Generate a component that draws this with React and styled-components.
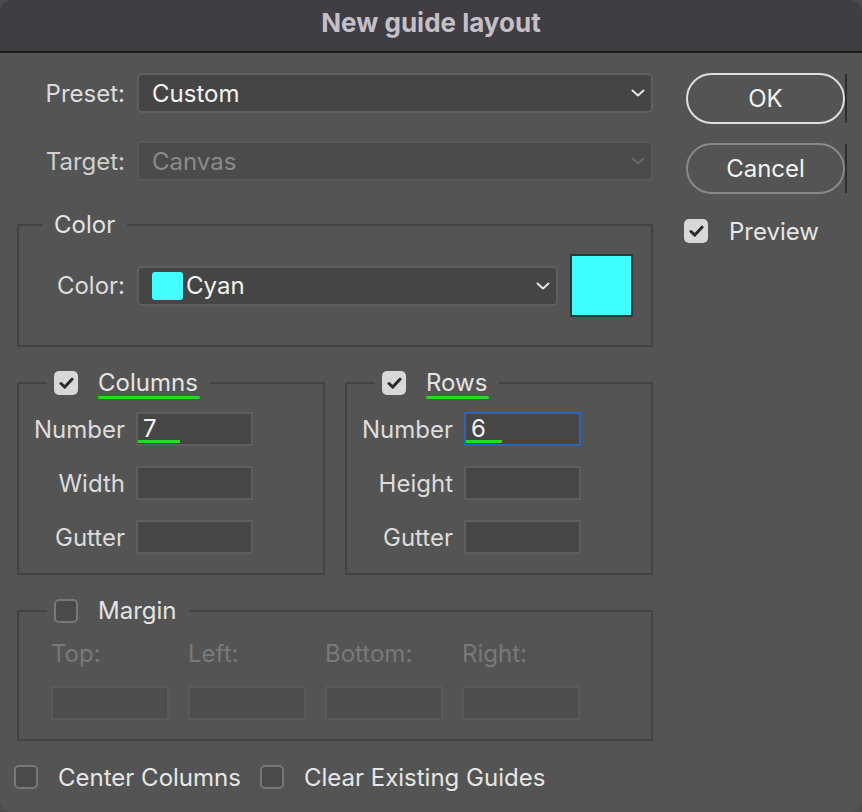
import React from 'react';
import styled, { createGlobalStyle, css } from 'styled-components';

const GlobalStyle = createGlobalStyle`
  html, body {
    margin: 0;
    background: #4c4c4c;
  }
  body {
    font-family: Inter, "Liberation Sans", Arial, sans-serif;
    -webkit-font-smoothing: antialiased;
  }
  * {
    box-sizing: border-box;
  }
`;

const Dialog = styled.div`
  width: 862px;
  height: 812px;
  background: #545454;
  border-radius: 12px;
  overflow: hidden;
  display: flex;
  flex-direction: column;
  color: #dedede;
  font-size: 24px;
`;

const TitleBar = styled.header`
  height: 53px;
  flex: none;
  background: #403e43;
  border-bottom: 2px solid #1d1d1d;
  display: flex;
  align-items: center;
  justify-content: center;
  font-size: 26px;
  font-weight: 700;
  color: #c4c0c9;
  padding-bottom: 6px;
`;

const Body = styled.div`
  display: flex;
  gap: 33px;
  padding: 20px 16px 0 17px;
`;

const LeftCol = styled.div`
  width: 636px;
  display: flex;
  flex-direction: column;
`;

const RightCol = styled.div`
  width: 159px;
  display: flex;
  flex-direction: column;
`;

const Row = styled.div`
  display: flex;
  align-items: center;
  height: ${p => p.$h || 40}px;
  margin-top: ${p => p.$mt || 0}px;
`;

const Label = styled.span`
  width: ${p => p.$w || 108}px;
  margin-right: ${p => p.$gap || 12}px;
  text-align: right;
  color: ${p => (p.$disabled ? '#d0d0d0' : '#dcdcdc')};
  flex: none;
`;

const Select = styled.div`
  flex: ${p => (p.$w ? 'none' : 1)};
  width: ${p => (p.$w ? `${p.$w}px` : 'auto')};
  height: 40px;
  display: flex;
  align-items: center;
  padding: 0 6px 0 13px;
  border-radius: 5px;
  background: ${p => (p.$disabled ? '#4b4b4b' : '#454545')};
  border: 2px solid ${p => (p.$disabled ? '#595959' : '#5f5f5f')};
  color: ${p => (p.$disabled ? '#8a8a8a' : '#f3f3f3')};
`;

const SelectValue = styled.span`
  flex: 1;
  display: flex;
  align-items: center;
  gap: 3px;
`;

const ChipSwatch = styled.span`
  width: 31px;
  height: 28px;
  border-radius: 3px;
  background: #43ffff;
`;

const BigSwatch = styled.div`
  width: 63px;
  height: 63px;
  margin-left: 12px;
  background: #40ffff;
  border: 2px solid #2b3838;
  flex: none;
`;

const Chevron = ({ disabled }) => (
  <svg width="14" height="8" viewBox="0 0 14 8" fill="none">
    <path
      d="M1.5 1.5l5.5 5 5.5-5"
      stroke={disabled ? '#676767' : '#e6e6e6'}
      strokeWidth="2"
      strokeLinecap="round"
      strokeLinejoin="round"
    />
  </svg>
);

const Group = styled.fieldset`
  margin: ${p => p.$mt || 0}px 0 0;
  padding: 15px 0 ${p => p.$pb || 19}px 0;
  border: 2px solid #434343;
  min-width: 0;
  flex: 1;
`;

const Legend = styled.legend`
  margin-left: ${p => p.$ml || 24}px;
  padding: 0 12px 0 ${p => p.$pl || 11}px;
  height: 28px;
  line-height: 28px;
  display: flex;
  align-items: center;
  gap: 20px;
  color: #e4e4e4;
`;

const Marked = styled.span`
  position: relative;
  ${p =>
    p.$mark &&
    css`
      &::after {
        content: '';
        position: absolute;
        left: 0;
        right: -2px;
        bottom: -2px;
        height: 3px;
        border-radius: 2px;
        background: #1fe01f;
      }
    `}
`;

const GroupPair = styled.div`
  display: flex;
  gap: 20px;
  margin-top: 22px;
`;

const FieldList = styled.div`
  display: flex;
  flex-direction: column;
  gap: 20px;
`;

const Field = styled.div`
  position: relative;
  width: ${p => p.$w || 117}px;
  height: 34px;
  background: ${p => (p.$disabled ? '#4d4d4d' : '#464646')};
  border: 2px solid ${p => (p.$focus ? '#2f64b2' : p.$disabled ? '#5a5a5a' : '#5e5e5e')};
  color: #f4f4f4;
  padding-left: 5px;
  line-height: 30px;
  ${p =>
    p.$mark &&
    css`
      &::after {
        content: '';
        position: absolute;
        left: 0;
        bottom: 1px;
        width: ${p.$mark}px;
        height: 3px;
        background: #1fe01f;
      }
    `}
`;

const MarginGrid = styled.div`
  display: grid;
  grid-template-columns: repeat(4, 118px);
  column-gap: 19px;
  row-gap: 18px;
  padding-left: 32px;
`;

const DimLabel = styled.span`
  color: #797979;
  height: 28px;
  line-height: 28px;
`;

const Box = styled.span`
  width: 24px;
  height: 24px;
  flex: none;
  border-radius: 5px;
  display: inline-flex;
  align-items: center;
  justify-content: center;
  background: ${p => (p.$checked ? '#d8d8d8' : '#4a4a4a')};
  border: ${p => (p.$checked ? 'none' : '2px solid #787878')};
`;

const Checkbox = ({ checked }) => (
  <Box $checked={checked}>
    {checked && (
      <svg width="15" height="12" viewBox="0 0 15 12" fill="none">
        <path
          d="M2 6.5l3.8 3.6L13 2.2"
          stroke="#2a2a2a"
          strokeWidth="3"
          strokeLinecap="round"
          strokeLinejoin="round"
        />
      </svg>
    )}
  </Box>
);

const CheckRow = styled.label`
  display: flex;
  align-items: center;
  height: 28px;
  gap: ${p => p.$gap || 20}px;
  margin: ${p => p.$mt || 0}px 0 0 ${p => p.$ml || 0}px;
  color: #e6e6e6;
`;

const BottomRow = styled.div`
  display: flex;
  align-items: center;
  gap: 19px;
  margin: 22px 0 0 -3px;
`;

const Button = styled.button`
  position: relative;
  width: 159px;
  height: 51px;
  margin-top: ${p => p.$mt || 0}px;
  border-radius: 26px;
  background: transparent;
  border: 2px solid ${p => (p.$primary ? '#dedede' : '#898989')};
  color: #f2f2f2;
  font: inherit;
  font-size: 24px;

  &::after {
    content: '';
    position: absolute;
    right: -4px;
    top: -1px;
    bottom: -1px;
    width: 2px;
    background: #2e2e2e;
  }
`;

export default function App() {
  return (
    <>
      <GlobalStyle />
      <Dialog>
        <TitleBar>New guide layout</TitleBar>
        <Body>
          <LeftCol>
            <Row>
              <Label>Preset:</Label>
              <Select>
                <SelectValue>Custom</SelectValue>
                <Chevron />
              </Select>
            </Row>
            <Row $mt={28}>
              <Label $disabled>Target:</Label>
              <Select $disabled>
                <SelectValue>Canvas</SelectValue>
                <Chevron disabled />
              </Select>
            </Row>

            <Group $mt={30} $pb={28}>
              <Legend $ml={24}>Color</Legend>
              <Row $h={63}>
                <Label $w={106}>Color:</Label>
                <Select $w={421}>
                  <SelectValue>
                    <ChipSwatch />
                    Cyan
                  </SelectValue>
                  <Chevron />
                </Select>
                <BigSwatch />
              </Row>
            </Group>

            <GroupPair>
              <Group>
                <Legend $ml={28} $pl={7}>
                  <Checkbox checked />
                  <Marked $mark>Columns</Marked>
                </Legend>
                <FieldList>
                  <Row $h={34}>
                    <Label $w={106} $gap={11}>Number</Label>
                    <Field $mark={42}>7</Field>
                  </Row>
                  <Row $h={34}>
                    <Label $w={106} $gap={11}>Width</Label>
                    <Field />
                  </Row>
                  <Row $h={34}>
                    <Label $w={106} $gap={11}>Gutter</Label>
                    <Field />
                  </Row>
                </FieldList>
              </Group>
              <Group>
                <Legend $ml={28} $pl={7}>
                  <Checkbox checked />
                  <Marked $mark>Rows</Marked>
                </Legend>
                <FieldList>
                  <Row $h={34}>
                    <Label $w={106} $gap={11}>Number</Label>
                    <Field $focus $mark={36}>6</Field>
                  </Row>
                  <Row $h={34}>
                    <Label $w={106} $gap={11}>Height</Label>
                    <Field />
                  </Row>
                  <Row $h={34}>
                    <Label $w={106} $gap={11}>Gutter</Label>
                    <Field />
                  </Row>
                </FieldList>
              </Group>
            </GroupPair>

            <Group $mt={22}>
              <Legend $ml={28} $pl={7}>
                <Checkbox />
                <span>Margin</span>
              </Legend>
              <MarginGrid>
                <DimLabel>Top:</DimLabel>
                <DimLabel>Left:</DimLabel>
                <DimLabel>Bottom:</DimLabel>
                <DimLabel>Right:</DimLabel>
                <Field $w={118} $disabled />
                <Field $w={118} $disabled />
                <Field $w={118} $disabled />
                <Field $w={118} $disabled />
              </MarginGrid>
            </Group>

            <BottomRow>
              <CheckRow>
                <Checkbox />
                Center Columns
              </CheckRow>
              <CheckRow>
                <Checkbox />
                Clear Existing Guides
              </CheckRow>
            </BottomRow>
          </LeftCol>

          <RightCol>
            <Button $primary>OK</Button>
            <Button $mt={19}>Cancel</Button>
            <CheckRow $mt={23} $ml={-2} $gap={21}>
              <Checkbox checked />
              Preview
            </CheckRow>
          </RightCol>
        </Body>
      </Dialog>
    </>
  );
}
